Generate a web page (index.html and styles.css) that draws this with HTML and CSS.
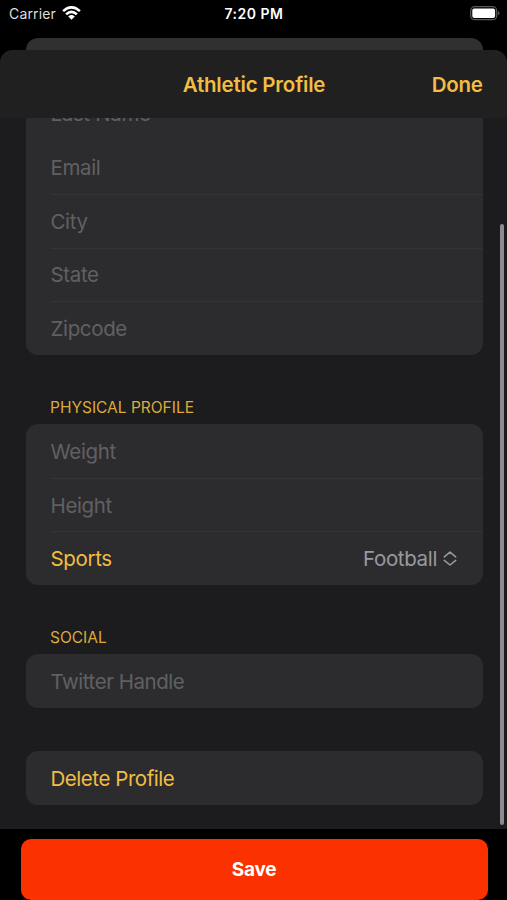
FILE: index.html
```html
<!DOCTYPE html>
<html lang="en">
<head>
<meta charset="utf-8">
<title>Athletic Profile</title>
<link rel="stylesheet" href="styles.css">
</head>
<body>
<div class="status">
  <div class="carrier"><span class="carrier-name">Carrier</span>
    <svg class="wifi" width="19" height="14" viewBox="0 0 19 14" fill="none" stroke="#fff" stroke-width="2.6"><path d="M1.1 5.1Q9.5-2.4 17.9 5.1M4.1 8.4Q9.5 3.3 14.9 8.4"/><path d="M6.2 10.5Q9.5 7.7 12.8 10.5L9.5 13.7Z" fill="#fff" stroke="none"/></svg>
  </div>
  <span class="time">7:20 PM</span>
  <svg class="battery" width="30" height="15" viewBox="0 0 30 15"><rect x=".7" y=".7" width="26" height="13" rx="4" fill="none" stroke="#59595b" stroke-width="1.3"/><rect x="2.3" y="2.5" width="22.8" height="9.4" rx="2" fill="#fff"/><path d="M28 5Q31 7.2 28 9.4Z" fill="#59595b"/></svg>
</div>
<div class="back-sheet"></div>
<main class="sheet">
  <header class="nav"><h1 class="title">Athletic Profile</h1><span class="done">Done</span></header>
  <div class="form">
    <section class="card">
      <div class="row"><span class="hint">Last Name</span></div>
      <div class="row row-plain"><span class="hint">Email</span></div>
      <div class="row"><span class="hint">City</span></div>
      <div class="row"><span class="hint">State</span></div>
      <div class="row"><span class="hint">Zipcode</span></div>
    </section>
    <h2 class="heading">PHYSICAL PROFILE</h2>
    <section class="card">
      <div class="row"><span class="hint">Weight</span></div>
      <div class="row"><span class="hint">Height</span></div>
      <div class="row"><span class="accent">Sports</span><span class="picker">Football<svg class="chevrons" width="14" height="16" viewBox="0 0 14 16" fill="none" stroke="#98989f" stroke-width="1.6" stroke-linecap="round" stroke-linejoin="round"><path d="M1.3 5.8L7 1.2L12.7 5.8M1.3 9.4L7 14L12.7 9.4"/></svg></span></div>
    </section>
    <h2 class="heading">SOCIAL</h2>
    <section class="card"><div class="row"><span class="hint twitter">Twitter Handle</span></div></section>
    <section class="card card-delete"><div class="row"><span class="accent delete">Delete Profile</span></div></section>
    <div class="scrollbar"></div>
  </div>
</main>
<footer class="footer"><button class="save">Save</button></footer>
</body>
</html>
```

FILE: styles.css
```css
* { box-sizing: border-box; }
body {
  margin: 0;
  width: 507px;
  height: 900px;
  overflow: hidden;
  display: flex;
  flex-direction: column;
  background: #000;
  font-family: Inter, "Liberation Sans", sans-serif;
  font-size: 20px;
  line-height: 24px;
  white-space: nowrap;
}
.status {
  height: 38px;
  flex: none;
  display: grid;
  grid-template-columns: 1fr auto 1fr;
  align-items: start;
  padding: 6px 7px 0 9px;
  color: #fff;
  font-size: 14px;
  line-height: 16px;
}
.carrier { display: flex; gap: 6px; }
.carrier-name { color: #dedede; letter-spacing: .15px; }
.time {
  font-weight: 600;
  letter-spacing: .5px;
  margin-right: 1px;
}
.battery { justify-self: end; }
.back-sheet {
  height: 12px;
  flex: none;
  margin: 0 24.5px 0 25.5px;
  border-radius: 12px 12px 0 0;
  background: #303030;
}
.sheet {
  height: 779px;
  flex: none;
  display: flex;
  flex-direction: column;
  overflow: hidden;
  border-radius: 13px 13px 0 0;
  background: #1c1c1e;
}
.nav {
  height: 68px;
  flex: none;
  display: grid;
  grid-template-columns: 1fr auto 1fr;
  align-items: center;
  padding: 1px 24.5px 0 25.5px;
  background: #202020;
  color: #f2bd42;
}
.title {
  grid-column: 2;
  margin: 0;
  font-size: 20.5px;
  font-weight: 600;
  letter-spacing: -.2px;
}
.done {
  justify-self: end;
  font-size: 20.5px;
  font-weight: 600;
  letter-spacing: -.3px;
}
.form {
  position: relative;
  flex: 1;
  min-height: 0;
  overflow: hidden;
  display: flex;
  flex-direction: column;
  justify-content: flex-end;
  padding: 0 24.5px 24px 25.5px;
}
.card {
  flex: none;
  border-radius: 12px;
  background: #2c2c2e;
}
.row {
  height: 53.7px;
  display: flex;
  align-items: center;
  justify-content: space-between;
  margin-left: 25px;
  padding: 2px 25.5px 0 0;
  font-size: 20.5px;
  letter-spacing: -.35px;
}
.row + .row { box-shadow: inset 0 1px #343436; }
.row + .row-plain { box-shadow: none; }
.hint { color: #606063; }
.accent { color: #f2bd42; }
.twitter, .delete { letter-spacing: -.45px; }
.picker {
  display: flex;
  align-items: center;
  gap: 6px;
  color: #98989f;
}
.heading {
  flex: none;
  height: 69px;
  margin: 0;
  padding: 43px 24.5px 0;
  font-size: 15.5px;
  line-height: 20px;
  font-weight: 400;
  color: #dcaa3a;
}
.card-delete { margin-top: 43.6px; }
.scrollbar {
  position: absolute;
  right: 3px;
  top: 106px;
  bottom: 4px;
  width: 4px;
  border-radius: 2px;
  background: #8c8c8e;
}
.footer {
  flex: 1;
  padding: 10px 19.5px 0 20.5px;
}
.save {
  display: block;
  width: 467px;
  height: 61px;
  padding: 1px 0 0;
  border: 0;
  border-radius: 10px;
  background: #fb3200;
  color: #fff;
  font: 700 19px/24px Inter, "Liberation Sans", sans-serif;
  letter-spacing: -.2px;
}
```
